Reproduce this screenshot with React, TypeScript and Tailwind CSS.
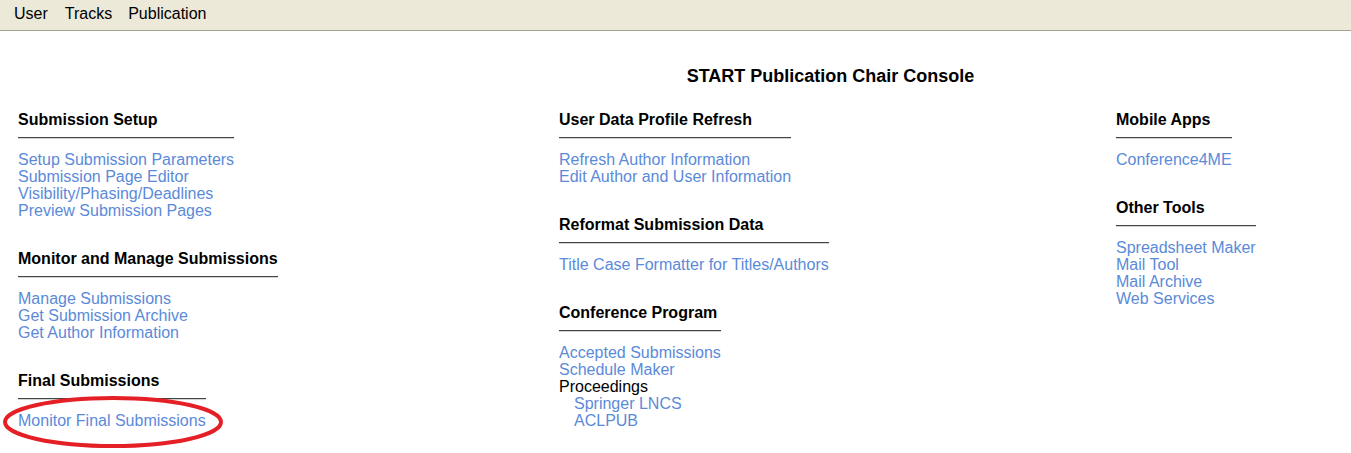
type Item = { label: string; link?: boolean; indent?: boolean };
type Section = { title: string; items: Item[] };

const links = (...labels: string[]): Item[] => labels.map((label) => ({ label, link: true }));

const left: Section[] = [
  {
    title: "Submission Setup",
    items: links(
      "Setup Submission Parameters",
      "Submission Page Editor",
      "Visibility/Phasing/Deadlines",
      "Preview Submission Pages"
    ),
  },
  {
    title: "Monitor and Manage Submissions",
    items: links("Manage Submissions", "Get Submission Archive", "Get Author Information"),
  },
  { title: "Final Submissions", items: links("Monitor Final Submissions") },
];

const middle: Section[] = [
  {
    title: "User Data Profile Refresh",
    items: links("Refresh Author Information", "Edit Author and User Information"),
  },
  { title: "Reformat Submission Data", items: links("Title Case Formatter for Titles/Authors") },
  {
    title: "Conference Program",
    items: [
      ...links("Accepted Submissions", "Schedule Maker"),
      { label: "Proceedings" },
      { label: "Springer LNCS", link: true, indent: true },
      { label: "ACLPUB", link: true, indent: true },
    ],
  },
];

const right: Section[] = [
  { title: "Mobile Apps", items: links("Conference4ME") },
  {
    title: "Other Tools",
    items: links("Spreadsheet Maker", "Mail Tool", "Mail Archive", "Web Services"),
  },
];

function Block({ section }: { section: Section }) {
  return (
    <div className="w-fit">
      <h3 className="pb-[8px] text-[16px] font-bold leading-[18px] text-black">{section.title}</h3>
      <div className="h-[2px] border-t border-b border-t-[#444] border-b-[#d4d4d4]" />
      <ul className="mt-[12px]">
        {section.items.map((it) => (
          <li key={it.label} className={`leading-[17px] ${it.indent ? "pl-[15px]" : ""}`}>
            {it.link ? (
              <a href="#" className="text-[#5b8ad9]">
                {it.label}
              </a>
            ) : (
              <span className="text-black">{it.label}</span>
            )}
          </li>
        ))}
      </ul>
    </div>
  );
}

function Column({ sections, className }: { sections: Section[]; className?: string }) {
  return (
    <div className={`flex flex-col gap-[31px] ${className ?? ""}`}>
      {sections.map((s) => (
        <Block key={s.title} section={s} />
      ))}
    </div>
  );
}

export default function App() {
  return (
    <div
      className="relative min-h-[453px] bg-white text-[16px] text-black"
      style={{ fontFamily: '"Liberation Sans", Arial, sans-serif' }}
    >
      <nav className="flex h-[31px] items-center border-b border-[#a3a394] bg-[#ece9d8] pb-[2px] pl-[14px]">
        <span>User</span>
        <span className="ml-[17px]">Tracks</span>
        <span className="ml-[16px]">Publication</span>
      </nav>

      <h1 className="mt-[35px] pl-[310px] text-center text-[18px] font-bold leading-[21px]">
        START Publication Chair Console
      </h1>

      <div className="mt-[24px] flex pl-[18px]">
        <Column sections={left} className="w-[541px]" />
        <Column sections={middle} className="w-[557px]" />
        <Column sections={right} />
      </div>

      {/* red annotation circling the final submissions link */}
      <svg className="pointer-events-none absolute left-0 top-[395px]" width="230" height="56">
        <ellipse cx="113" cy="27" rx="108" ry="24" fill="none" stroke="#e41f26" strokeWidth="4" />
      </svg>
    </div>
  );
}
